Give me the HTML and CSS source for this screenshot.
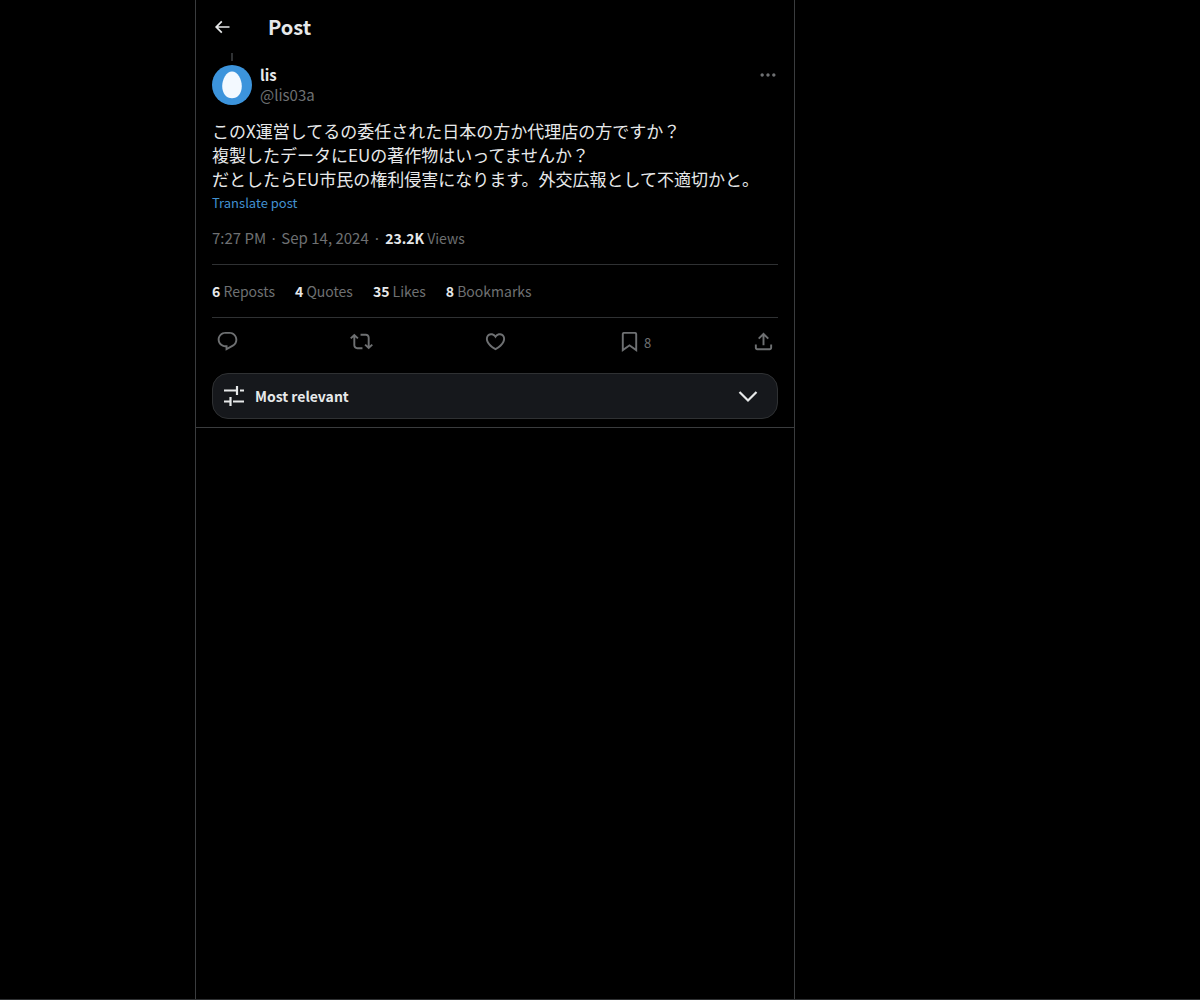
FILE: index.html
```html
<!DOCTYPE html>
<html lang="en">
<head>
<meta charset="utf-8">
<meta name="viewport" content="width=device-width, initial-scale=1">
<title>Post</title>
<link rel="stylesheet" href="styles.css">
</head>
<body>
<main class="column">
  <header class="topbar">
    <button class="icon-button" type="button" aria-label="Back">
      <svg class="icon" viewBox="0 0 24 24"><path d="M7.414 13l5.043 5.04-1.414 1.42L3.586 12l7.457-7.46 1.414 1.42L7.414 11H21v2H7.414z"/></svg>
    </button>
    <h1 class="title">Post</h1>
  </header>

  <article class="post">
    <div class="thread-line"></div>
    <div class="author">
      <svg class="avatar" viewBox="0 0 40 40" aria-hidden="true">
        <circle cx="20" cy="20" r="20" fill="#3c94dc"/>
        <path d="M20 6.500c5.600 0 9.800 8 9.800 14.500 0 7.500-4.200 12.300-9.800 12.300s-9.800-4.800-9.800-12.300c0-6.500 4.200-14.500 9.800-14.500z" fill="#f3f9ff"/>
      </svg>
      <div class="names">
        <a class="name" href="#">lis</a>
        <a class="handle" href="#">@lis03a</a>
      </div>
      <button class="icon-button more" type="button" aria-label="More">
        <svg class="icon" viewBox="0 0 24 24"><path d="M3 12c0-1.100.9-2 2-2s2 .9 2 2-.9 2-2 2-2-.9-2-2zm9 2c1.100 0 2-.9 2-2s-.9-2-2-2-2 .9-2 2 .9 2 2 2zm7 0c1.100 0 2-.9 2-2s-.9-2-2-2-2 .9-2 2 .9 2 2 2z"/></svg>
      </button>
    </div>

    <p class="body-text" lang="ja">このX運営してるの委任された日本の方か代理店の方ですか？<br>複製したデータにEUの著作物はいってませんか？<br>だとしたらEU市民の権利侵害になります。外交広報として不適切かと。</p>
    <a class="translate" href="#">Translate post</a>

    <div class="meta">
      <time datetime="2024-09-14T19:27">7:27 PM · Sep 14, 2024</time>
      <span>·</span>
      <span class="views"><strong>23.2K</strong> Views</span>
    </div>

    <div class="stats">
      <a href="#"><strong>6</strong> Reposts</a>
      <a href="#"><strong>4</strong> Quotes</a>
      <a href="#"><strong>35</strong> Likes</a>
      <a href="#"><strong>8</strong> Bookmarks</a>
    </div>

    <div class="actions">
      <button class="action" type="button" aria-label="Reply">
        <svg viewBox="0 0 24 24"><path d="M1.751 10c0-4.42 3.584-8 8.005-8h4.366c4.49 0 8.129 3.64 8.129 8.13 0 2.96-1.607 5.68-4.196 7.11l-8.054 4.46v-3.69h-.067c-4.49.1-8.183-3.51-8.183-8.01zm8.005-6c-3.317 0-6.005 2.69-6.005 6 0 3.37 2.77 6.08 6.138 6.01l.351-.01h1.761v2.3l5.087-2.81c1.951-1.08 3.163-3.13 3.163-5.36 0-3.39-2.744-6.13-6.129-6.13H9.756z"/></svg>
      </button>
      <button class="action" type="button" aria-label="Repost">
        <svg viewBox="0 0 24 24"><path d="M4.5 3.88l4.432 4.14-1.364 1.46L5.5 7.55V16c0 1.1.896 2 2 2H13v2H7.5c-2.209 0-4-1.79-4-4V7.55L1.432 9.48.068 8.02 4.5 3.88zM16.5 6H11V4h5.500c2.209 0 4 1.79 4 4v8.450l2.068-1.930 1.364 1.460-4.432 4.140-4.432-4.140 1.364-1.460 2.068 1.930V8c0-1.100-.896-2-2-2z"/></svg>
      </button>
      <button class="action" type="button" aria-label="Like">
        <svg viewBox="0 0 24 24"><path d="M16.697 5.5c-1.222-.06-2.679.51-3.89 2.16l-.805 1.09-.806-1.09C9.984 6.01 8.526 5.44 7.304 5.5c-1.243.07-2.349.78-2.91 1.91-.552 1.12-.633 2.78.479 4.82 1.074 1.97 3.257 4.27 7.129 6.61 3.87-2.34 6.052-4.64 7.126-6.61 1.111-2.04 1.03-3.7.477-4.82-.561-1.13-1.666-1.84-2.908-1.91zm4.187 7.69c-1.351 2.48-4.001 5.12-8.379 7.67l-.503.3-.504-.3c-4.379-2.55-7.029-5.19-8.382-7.67-1.36-2.5-1.41-4.86-.514-6.67.887-1.79 2.647-2.91 4.601-3.01 1.651-.09 3.368.56 4.798 2.01 1.429-1.45 3.146-2.1 4.796-2.01 1.954.1 3.714 1.22 4.601 3.01.896 1.81.846 4.17-.514 6.67z"/></svg>
      </button>
      <button class="action" type="button" aria-label="Bookmark, 8">
        <svg viewBox="0 0 24 24"><path d="M4 4.500C4 3.120 4.500 2 6 2h12c1.500 0 2 1.120 2 2.500v18.440l-8-5.710-8 5.710V4.500zM6.500 4c-.276 0-.5.22-.5.5v14.560l6-4.290 6 4.290V4.500c0-.28-.224-.5-.5-.5h-11z"/></svg>
        <span class="count">8</span>
      </button>
      <button class="action" type="button" aria-label="Share">
        <svg viewBox="0 0 24 24"><path d="M12 2.59l5.7 5.7-1.41 1.42L13 6.41V16h-2V6.410l-3.300 3.300-1.410-1.420L12 2.590zM21 15l-.02 3.510c0 1.380-1.120 2.490-2.500 2.490H5.500C4.110 21 3 19.880 3 18.500V15h2v3.500c0 .28.22.5.5.5h12.980c.28 0 .5-.22.5-.5L19 15h2z"/></svg>
      </button>
    </div>

    <button class="sort" type="button">
      <svg class="sort-icon" viewBox="0 0 22 22" aria-hidden="true"><path d="M1 5.500h13M17 5.500h4M14 1v9M1 16.500h6M10 16.500h11M7.500 12v9" fill="none" stroke="currentColor" stroke-width="2.200"/></svg>
      <span class="sort-label">Most relevant</span>
      <svg class="sort-icon" viewBox="0 0 22 22" aria-hidden="true"><path d="M2.500 7l8.500 8.500L19.500 7" fill="none" stroke="currentColor" stroke-width="2.200"/></svg>
    </button>
  </article>
</main>
</body>
</html>
```
FILE: styles.css
```css
:root {
  --text: #e7e9ea;
  --muted: #6e7072;
  --line: #2f3133;
  --link: #4291d0;
}

* {
  box-sizing: border-box;
}

body {
  margin: 0;
  background: #000;
  color: var(--text);
  font: 15px/20px "Noto Sans CJK JP", "Noto Sans", sans-serif;
  border-bottom: 1px solid var(--line);
}

h1,
p {
  margin: 0;
}

a {
  color: inherit;
  text-decoration: none;
}

button {
  margin: 0;
  padding: 0;
  border: 0;
  background: none;
  color: inherit;
  font: inherit;
  cursor: pointer;
}

svg {
  display: block;
  flex: none;
  fill: currentColor;
}

.column {
  max-width: 600px;
  min-height: calc(100vh - 1px);
  margin-left: 195px;
  border: solid #3a3c3e;
  border-width: 0 1px;
}

.topbar {
  display: flex;
  align-items: center;
  gap: 36px;
  height: 53px;
  padding: 0 16px;
}

.title {
  font-size: 20px;
  line-height: 24px;
  font-weight: 700;
}

.icon {
  width: 20px;
  height: 20px;
}

.post {
  display: flex;
  flex-direction: column;
  padding: 0 16px 8px;
  border-bottom: 1px solid #3a3c3e;
}

.thread-line {
  width: 2px;
  height: 8px;
  margin: 0 0 4px 19px;
  background: var(--line);
}

.author {
  display: flex;
  align-items: flex-start;
  gap: 8px;
}

.avatar {
  width: 40px;
  height: 40px;
}

.names {
  display: flex;
  flex: 1;
  flex-direction: column;
}

.name {
  font-weight: 700;
}

.handle,
.more {
  color: var(--muted);
}

.body-text {
  margin-top: 14px;
  font-size: 17px;
  line-height: 24px;
}

.translate {
  align-self: flex-start;
  margin-top: 2px;
  color: var(--link);
  font-size: 13px;
  line-height: 20px;
}

.meta {
  display: flex;
  align-items: baseline;
  gap: 4px;
  padding: 15px 0 16px;
  color: var(--muted);
}

.views,
.stats {
  font-size: 14px;
}

.stats {
  display: flex;
  flex-wrap: wrap;
  gap: 20px;
  padding: 16px 0;
  border: solid var(--line);
  border-width: 1px 0;
  color: var(--muted);
}

strong {
  color: var(--text);
  font-weight: 700;
}

.actions {
  display: grid;
  grid-template-columns: repeat(5, 23px);
  justify-content: space-between;
  height: 47px;
  padding: 0 3px 0 4px;
  color: var(--muted);
}

.action {
  display: flex;
  align-items: center;
  gap: 3px;
}

.action svg {
  width: 23px;
  height: 23px;
}

.count {
  padding-top: 2px;
  font-size: 13px;
}

.sort {
  display: flex;
  align-items: center;
  gap: 10px;
  margin-top: 8px;
  padding: 11px 18px 11px 10px;
  border: 1px solid var(--line);
  border-radius: 16px;
  background: #16181c;
  text-align: left;
}

.sort-icon {
  width: 22px;
  height: 22px;
}

.sort-label {
  flex: 1;
  font-size: 14px;
  font-weight: 700;
}
```
